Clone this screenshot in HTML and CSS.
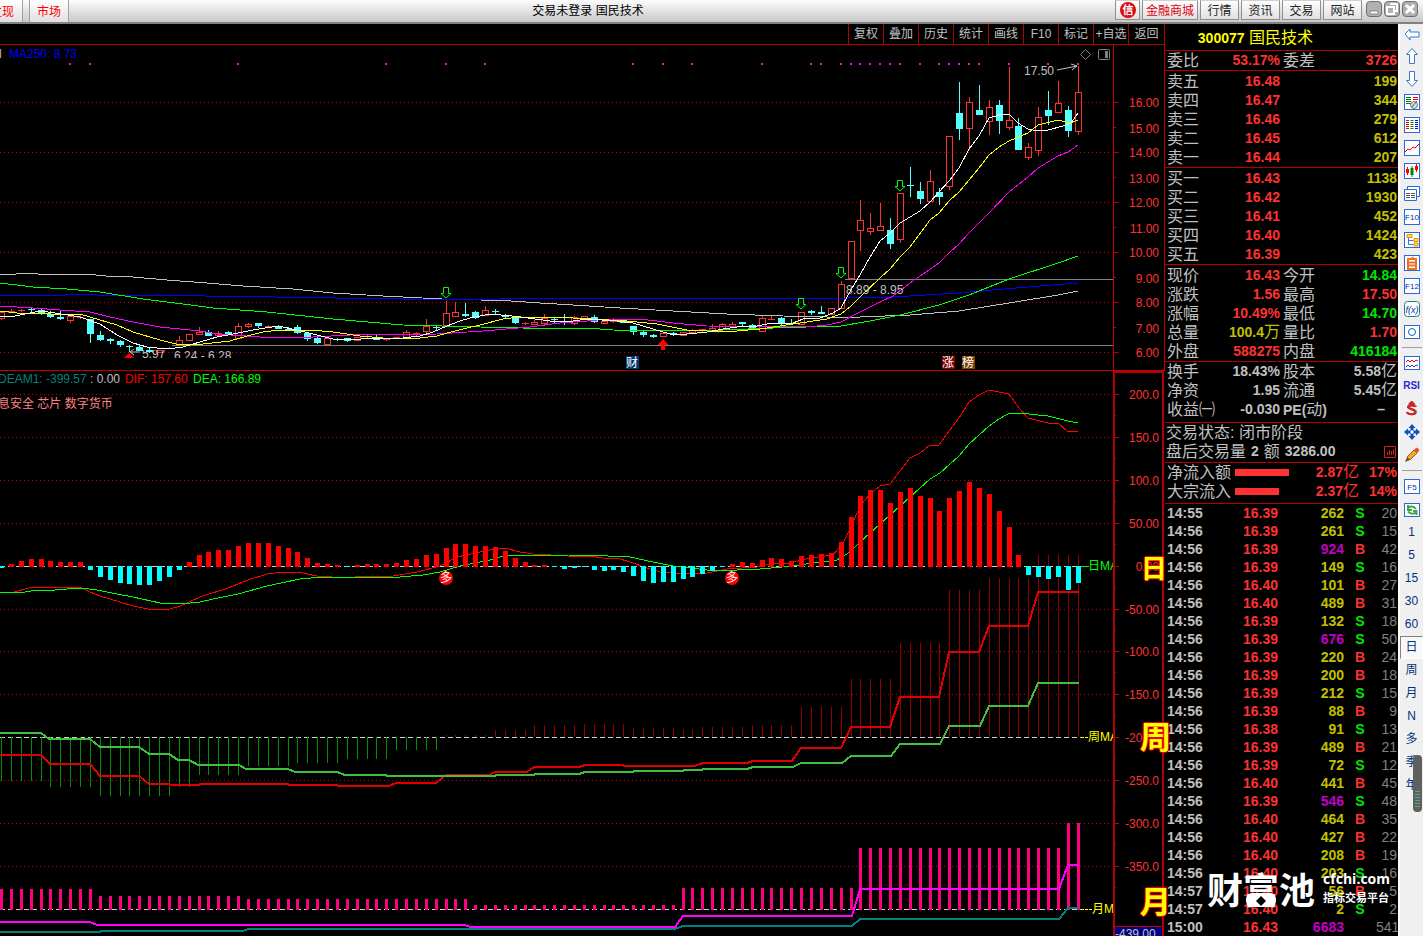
FILE: index.html
```html
<!DOCTYPE html>
<html lang="zh-CN">
<head>
<meta charset="utf-8">
<title>交易未登录 国民技术</title>
<link rel="stylesheet" href="styles.css">
</head>
<body>
<header class="topbar">
  <nav class="tabs">
    <button class="tab first">发现</button>
    <button class="tab">市场</button>
  </nav>
  <h1 class="title">交易未登录 国民技术</h1>
  <div class="links">
    <button class="link logo" aria-label="信"><svg width="18" height="18" viewBox="0 0 18 18"><circle cx="9" cy="9" r="8" fill="#d80c12"/><text x="9" y="13" text-anchor="middle" class="logo-text">信</text></svg></button>
    <button class="link mall">金融商城</button>
    <button class="link">行情</button>
    <button class="link">资讯</button>
    <button class="link">交易</button>
    <button class="link">网站</button>
  </div>
  <div class="winbtns">
    <button class="win" aria-label="最小化"><svg width="12" height="12" viewBox="0 0 12 12"><path d="M2 8h8v3H2z" fill="#fff" stroke="#888"/></svg></button>
    <button class="win" aria-label="还原"><svg width="12" height="12" viewBox="0 0 12 12"><path d="M4 1h7v7H9M1 4h7v7H1z" fill="none" stroke="#fff" stroke-width="2"/></svg></button>
    <button class="win" aria-label="关闭"><svg width="12" height="12" viewBox="0 0 12 12"><path d="M2 2l8 8M10 2l-8 8" stroke="#fff" stroke-width="3"/></svg></button>
  </div>
</header>

<main class="workspace">
  <section class="charts">
    <nav class="chart-tools">
      <button>复权</button><button>叠加</button><button>历史</button><button>统计</button><button>画线</button><button>F10</button><button>标记</button><button>+自选</button><button>返回</button>
    </nav>

    <svg class="pane price" viewBox="0 45 1165 326" preserveAspectRatio="xMaxYMin slice">
      <defs>
        <clipPath id="clip-low"><rect x="120" y="350" width="140" height="8"/></clipPath>
        <g id="down"><path d="M-2.5-5.5h5v6h2.500l-5 4.500-5-4.500h2.500z" fill="none" stroke="#00ff00"/></g>
      </defs>
      <g id="price-grid"></g>
      <g id="dots" fill="#ff00ff"></g>
      <g fill="none" class="crisp">
        <path d="M172 345.500H1113M845 279.500H1113" stroke="#808080"/>
        <g id="candles"></g>
        <polyline stroke="#c0c0c0" points="0,274 16,274 17,273 37,273 38,274 86,274 106,276 133,277 167,280 207,283 243,286 293,289 333,293 383,296 442,299 481,300 511,301 540,303 573,305 620,308 673,311 727,314 783,316 827,317 860,317 910,315 959,311 1009,303 1058,295 1078,291"/>
        <polyline stroke="#0000ff" points="0,295 65,295 67,294 95,294 97,295 203,295 205,296 273,296 275,297 333,297 335,298 401,298 403,299 499,299 501,298 846,298 893,297 959,293 1028,287 1078,283"/>
        <polyline stroke="#00ff00" points="0,283 33,287 67,289 100,292 143,299 183,304 213,308 267,312 333,319 403,325 480,327 523,328 587,328 613,330 670,331 723,330 773,328 841,326 870,321 900,315 939,305 969,295 1009,279 1058,263 1078,256"/>
        <polyline stroke="#ff00ff" points="0,306 33,308 60,310 90,312 110,317 133,322 160,327 200,331 217,334 260,337 313,337 350,335 437,334 483,331 530,327 560,323 587,321 607,319 640,319 673,323 707,326 807,327 827,325 841,322 860,312 880,302 893,296 910,283 939,263 949,253 959,244 969,233 989,213 1009,192 1028,177 1038,168 1058,156 1068,152 1078,145"/>
        <polyline stroke="#ffff00" points="0,311 17,313 50,314 80,314 90,317 117,325 133,332 160,340 180,345 203,344 230,341 247,336 263,332 280,330 310,330 333,332 360,336 383,338 420,338 437,336 447,333 467,328 480,325 503,319 520,317 573,318 627,321 657,324 687,330 707,331 737,331 760,329 793,324 827,319 841,314 851,306 860,297 880,278 890,269 900,257 910,247 930,220 939,213 949,201 959,192 969,180 979,168 989,155 999,147 1009,141 1028,133 1038,125 1058,120 1070,123 1078,120"/>
        <polyline stroke="#ffffff" points="0,316 15,316 20,315 30,313 40,311 55,313 80,317 100,324 117,335 133,343 147,347 167,349 183,347 200,342 217,337 233,334 253,330 278,326 297,330 313,334 333,339 353,340 370,338 403,338 420,336 433,332 447,326 460,321 470,318 490,314 512,316 528,318 550,321 573,321 587,319 617,321 633,323 653,329 670,334 687,334 707,332 723,329 737,327 757,326 767,324 793,323 803,319 820,318 833,313 841,308 848,295 860,275 870,257 880,241 890,233 900,223 920,211 930,202 939,192 949,181 959,168 969,149 979,136 989,118 999,115 1009,114 1018,123 1028,129 1038,131 1048,130 1063,126 1071,123 1078,113"/>
      </g>
      <use href="#down" x="446" y="293"/><use href="#down" x="801" y="304"/><use href="#down" x="841" y="273"/><use href="#down" x="900" y="186"/>
      <path d="M663 339l5.500 6h-3.500v5h-4v-5h-3.500zM124 358l5-5 5 5z" fill="#ff0000"/>
      <g class="t" fill="#c0c0c0">
        <text x="-1" y="58">l</text>
        <text x="1024" y="75">17.50</text>
        <text x="846" y="294">8.89 - 8.95</text>
        <g clip-path="url(#clip-low)"><text x="142" y="358">5.97</text><text x="174" y="360">6.24 - 6.28</text></g>
      </g>
      <text class="t" x="9" y="58" fill="#0000ff">MA250: 8.73</text>
      <path d="M1057 70l20-4M1071 64l6 2-5 4M131 352h9M134 349l-4 3 4 3" fill="none" stroke="#c0c0c0"/>
      <path d="M1085.500 49.500l5 5-5 5-5-5z" fill="none" stroke="#808080"/>
      <rect x="1098.500" y="49.500" width="11" height="10" rx="1" fill="none" stroke="#808080"/><rect x="1105" y="51" width="3" height="7" fill="#808080"/>
      <rect x="626" y="356" width="13" height="13" fill="#003870"/><rect x="942" y="356" width="13" height="13" fill="#800000"/><rect x="962" y="356" width="13" height="13" fill="#804000"/>
      <g class="t" fill="#fff" text-anchor="middle"><text x="632" y="367">财</text><text x="948" y="367">涨</text><text x="968" y="367">榜</text></g>
      <path class="crisp" d="M0 370.500H1165M1113.500 45V371M1164.500 45V371" stroke="#c00000"/>
      <g id="price-axis" class="t" fill="#ff3232" text-anchor="end"></g>
    </svg>

    <div class="lower">
    <svg class="pane" viewBox="0 371 1165 565" preserveAspectRatio="xMaxYMin slice">
      <defs><clipPath id="clip-right"><rect x="0" y="371" width="1113" height="565"/></clipPath></defs>
      <g id="ind-grid"></g>
      <g fill="none" class="crisp">
        <polyline stroke="#ff0000" points="0,593 14,592 29,588 35,587 60,588 80,587 90,592 100,596 120,602 133,606 148,609 170,609 180,606 200,597 228,588 248,580 267,574 283,572 298,572 317,576 347,578 363,576 393,576 417,572 440,566 457,557 480,552 495,549 505,548 520,552 533,554 568,556 590,556 603,558 617,558 630,562 647,568 660,572 673,573 707,573 727,569 757,567 770,564 790,563 810,558 833,555 843,543 851,527 860,506 870,494 880,486 890,484 910,458 920,453 930,445 939,445 949,431 959,418 969,402 979,395 989,390 999,392 1009,394 1019,408 1028,418 1048,423 1058,423 1068,432 1078,431"/>
        <polyline stroke="#00ff00" points="0,593 25,592 37,590 55,590 80,588 97,590 117,594 133,597 160,603 180,604 200,602 213,599 238,594 267,586 300,579 323,577 400,577 423,575 440,572 460,566 490,560 503,556 520,555 568,555 608,556 630,557 653,562 673,566 690,568 707,570 737,570 760,569 793,566 813,563 837,560 850,552 860,542 880,524 900,506 920,488 930,479 940,473 959,456 969,444 979,435 989,426 999,419 1008,414 1019,413 1048,416 1068,421 1078,423"/>
        <g id="bars"></g>
        <g stroke-width="2">
          <polyline stroke="#e00000" points="0,755 41,755 50,764 90,764 100,776 139,776 149,784 169,784 170,785 199,785 200,784 288,784 289,785 337,785 338,786 389,786 396,783 436,783 446,775 489,775 495,772 527,772 534,767 579,767 585,765 623,765 624,766 695,766 703,763 747,763 753,761 792,761 801,748 841,748 851,727 890,727 900,697 939,697 949,652 979,652 989,626 1028,626 1038,592 1079,592"/>
          <polyline stroke="#40c040" points="0,733 41,733 49,739 90,739 100,747 139,747 149,754 169,754 178,760 189,760 198,765 239,765 246,769 288,769 295,772 337,772 345,775 386,775 387,776 495,776 496,775 534,775 535,774 579,774 585,772 633,772 634,771 683,771 684,770 702,770 703,769 747,769 753,767 793,767 801,763 842,763 851,756 891,756 900,744 940,744 949,726 980,726 989,706 1028,706 1038,683 1079,683"/>
          <polyline stroke="#008080" points="0,932 100,932 101,931 243,931 248,929 675,929 683,926 852,926 860,919 1059,919 1068,908 1079,908"/>
          <polyline stroke="#ff00ff" points="0,922 90,922 97,925 465,925 470,927 675,927 683,916 852,916 860,889 1059,889 1068,865 1079,865"/>
        </g>
      </g>
      <g fill="#ff0000"><circle cx="446" cy="578" r="7"/><circle cx="732" cy="578" r="7"/></g>
      <g class="t" fill="#fff" text-anchor="middle"><text x="446" y="582">多</text><text x="732" y="582">多</text></g>
      <g clip-path="url(#clip-right)" class="t"><text x="1088" y="570" fill="#00ff00">日MA</text><text x="1088" y="741" fill="#ffff00">周MA</text><text x="1092" y="913" fill="#ffff00">月MA</text></g>
      <path class="crisp" d="M1081 566.500h8" stroke="#00ff00"/>
      <path class="crisp" d="M1081 737.500h8M1081 909.500h11" stroke="#ffff00" stroke-dasharray="3 1"/>
      <g class="t">
        <text x="-2" y="383" fill="#008080">DEAM1: -399.57</text>
        <text x="90" y="383" fill="#c0c0c0">: 0.00</text>
        <text x="125" y="383" fill="#ff0000">DIF: 157.60</text>
        <text x="193" y="383" fill="#00ff00">DEA: 166.89</text>
        <text x="-2" y="408" fill="#ff8080">息安全 芯片 数字货币</text>
      </g>
      <path class="crisp" d="M1114 371V936M1163 371V936M1113 372H1164" stroke="#b40000" stroke-width="2"/>
      <g id="ind-axis" class="t" fill="#ff3232" text-anchor="end"></g>
      <rect x="1115" y="927" width="47" height="9" fill="#000080"/>
      <path class="crisp" d="M1115 926.500H1162" stroke="#c00000"/>
      <text class="t" x="1115" y="938" fill="#c0c0c0">-439.00</text>
    </svg>
    <span class="big day">日</span><span class="big week">周</span><span class="big month">月</span>
    </div>
  </section>

  <aside class="quote">
    <h2 class="stock"><b>300077</b> 国民技术</h2>
    <table class="q ratio"><tr><th>委比</th><td class="r">53.17%</td><th>委差</th><td class="r">3726</td></tr></table>
    <table class="q book">
      <tr><th>卖五</th><td class="r">16.48</td><td class="y">199</td></tr>
      <tr><th>卖四</th><td class="r">16.47</td><td class="y">344</td></tr>
      <tr><th>卖三</th><td class="r">16.46</td><td class="y">279</td></tr>
      <tr><th>卖二</th><td class="r">16.45</td><td class="y">612</td></tr>
      <tr><th>卖一</th><td class="r">16.44</td><td class="y">207</td></tr>
    </table>
    <table class="q book">
      <tr><th>买一</th><td class="r">16.43</td><td class="y">1138</td></tr>
      <tr><th>买二</th><td class="r">16.42</td><td class="y">1930</td></tr>
      <tr><th>买三</th><td class="r">16.41</td><td class="y">452</td></tr>
      <tr><th>买四</th><td class="r">16.40</td><td class="y">1424</td></tr>
      <tr><th>买五</th><td class="r">16.39</td><td class="y">423</td></tr>
    </table>
    <table class="q">
      <tr><th>现价</th><td class="r">16.43</td><th>今开</th><td class="g">14.84</td></tr>
      <tr><th>涨跌</th><td class="r">1.56</td><th>最高</th><td class="r">17.50</td></tr>
      <tr><th>涨幅</th><td class="r">10.49%</td><th>最低</th><td class="g">14.70</td></tr>
      <tr><th>总量</th><td class="y">100.4<i>万</i></td><th>量比</th><td class="r">1.70</td></tr>
      <tr><th>外盘</th><td class="r">588275</td><th>内盘</th><td class="g">416184</td></tr>
    </table>
    <table class="q funds">
      <tr><th>换手</th><td>18.43%</td><th>股本</th><td>5.58<i>亿</i></td></tr>
      <tr><th>净资</th><td>1.95</td><th>流通</th><td>5.45<i>亿</i></td></tr>
      <tr><th>收益㈠</th><td>-0.030</td><th><b>PE(</b>动<b>)</b></th><td class="dash">–</td></tr>
    </table>
    <div class="status">
      <p>交易状态: 闭市阶段</p>
      <p>盘后交易量 <b>2</b> 额 <b>3286.00</b><svg class="mini" width="12" height="12" viewBox="0 0 12 12"><path d="M.5.5h11v11H.5zM3.500 9V6M5.500 9V4M7.500 9V5M9.500 9V3" fill="none" stroke="#d02020"/></svg></p>
    </div>
    <div class="flows">
      <div class="flow"><span class="name">净流入额</span><span class="track"><span class="bar" style="width:54px"></span></span><b>2.87<i>亿</i></b><b class="pct">17%</b></div>
      <div class="flow"><span class="name">大宗流入</span><span class="track"><span class="bar" style="width:44px"></span></span><b>2.37<i>亿</i></b><b class="pct">14%</b></div>
    </div>
    <table class="tape" id="tape">
      <tr><td>14:55</td><td>16.39</td><td>262</td><td class="g">S</td><td>20</td></tr>
      <tr><td>14:56</td><td>16.39</td><td>261</td><td class="g">S</td><td>15</td></tr>
      <tr><td>14:56</td><td>16.39</td><td class="m">924</td><td>B</td><td>42</td></tr>
      <tr><td>14:56</td><td>16.39</td><td>149</td><td class="g">S</td><td>16</td></tr>
      <tr><td>14:56</td><td>16.40</td><td>101</td><td>B</td><td>27</td></tr>
      <tr><td>14:56</td><td>16.40</td><td>489</td><td>B</td><td>31</td></tr>
      <tr><td>14:56</td><td>16.39</td><td>132</td><td class="g">S</td><td>18</td></tr>
      <tr><td>14:56</td><td>16.39</td><td class="m">676</td><td class="g">S</td><td>50</td></tr>
      <tr><td>14:56</td><td>16.39</td><td>220</td><td>B</td><td>24</td></tr>
      <tr><td>14:56</td><td>16.39</td><td>200</td><td>B</td><td>18</td></tr>
      <tr><td>14:56</td><td>16.39</td><td>212</td><td class="g">S</td><td>15</td></tr>
      <tr><td>14:56</td><td>16.39</td><td>88</td><td>B</td><td>9</td></tr>
      <tr><td>14:56</td><td>16.38</td><td>91</td><td class="g">S</td><td>13</td></tr>
      <tr><td>14:56</td><td>16.39</td><td>489</td><td>B</td><td>21</td></tr>
      <tr><td>14:56</td><td>16.39</td><td>72</td><td class="g">S</td><td>12</td></tr>
      <tr><td>14:56</td><td>16.40</td><td>441</td><td>B</td><td>45</td></tr>
      <tr><td>14:56</td><td>16.39</td><td class="m">546</td><td class="g">S</td><td>48</td></tr>
      <tr><td>14:56</td><td>16.40</td><td>464</td><td>B</td><td>35</td></tr>
      <tr><td>14:56</td><td>16.40</td><td>427</td><td>B</td><td>22</td></tr>
      <tr><td>14:56</td><td>16.40</td><td>208</td><td>B</td><td>19</td></tr>
      <tr><td>14:56</td><td>16.40</td><td>203</td><td class="g">S</td><td>16</td></tr>
      <tr><td>14:57</td><td>16.40</td><td>56</td><td>B</td><td>5</td></tr>
      <tr><td>14:57</td><td>16.40</td><td>2</td><td class="g">S</td><td>2</td></tr>
      <tr><td>15:00</td><td>16.43</td><td class="m">6683</td><td></td><td>541</td></tr>
    </table>
    <div class="mark">
      <span class="brand">财富池<svg class="pot" width="30" height="14" viewBox="0 0 30 14"><rect width="30" height="14" rx="6" fill="#fff"/><path d="M15 3l5 5-5 5-5-5z" fill="#000"/></svg></span>
      <span class="site"><b>cfchi.com</b><small>指标交易平台</small></span>
    </div>
  </aside>

  <nav class="side">
    <button aria-label="后退"><svg viewBox="0 0 16 16"><path d="M1 8l5-5v3h9v5H6v3z" fill="#fff" stroke="#3878d8"/></svg></button>
    <button aria-label="向上"><svg viewBox="0 0 16 16"><path d="M8 .5l5.500 6h-3v9h-5v-9h-3z" fill="#fff" stroke="#3878d8"/></svg></button>
    <button aria-label="向下"><svg viewBox="0 0 16 16"><path d="M8 15.500l5.500-6h-3v-9h-5v9h-3z" fill="#fff" stroke="#3878d8"/></svg></button>
    <button aria-label="自选报价"><svg viewBox="0 0 16 16"><rect class="f" x=".5" y=".5" width="15" height="15"/><path d="M2 3.500h5M2 5.500h5M2 7.500h5M2 9.500h5" stroke="#008000"/><path d="M9 3.500h5M9 5.500h5" stroke="#ff0000"/><circle cx="10" cy="11" r="3.500" fill="#ddd" stroke="#777"/><path d="M8 13l5-6" stroke="#555"/></svg></button>
    <button aria-label="行情列表"><svg viewBox="0 0 16 16"><rect class="f" x=".5" y=".5" width="15" height="15"/><g stroke-width="3" stroke-dasharray="1 1"><path d="M3.500 3v10" stroke="#ff0000"/><path d="M8 3v10" stroke="#008000"/><path d="M12.500 3v10" stroke="#0000e0"/></g></svg></button>
    <button aria-label="分时图"><svg viewBox="0 0 16 16"><rect class="f" x=".5" y=".5" width="15" height="15"/><path d="M1 12l3-3 2 1 3-3 2 1 4-4" fill="none" stroke="#ff0000"/></svg></button>
    <button aria-label="K线图"><svg viewBox="0 0 16 16"><rect class="f" x=".5" y=".5" width="15" height="15"/><path d="M3.500 4v8M12.500 1v8" stroke="#ff0000"/><path d="M2 6h3v4H2zM11 3h3v4h-3z" fill="#ff0000"/><path d="M8 3v11" stroke="#008000"/><path d="M6.500 5h3v7h-3z" fill="#008000"/></svg></button>
    <button aria-label="多股"><svg viewBox="0 0 16 16"><path class="f" d="M3.500.5h12v10h-12z"/><path class="f" d="M.5 3.500h12v11H.5z"/><path d="M2 7.500h4M7 7.500h4M2 9.500h4M7 9.500h4M2 11.500h4M7 11.500h4" stroke="#555"/></svg></button>
    <button aria-label="F10"><svg viewBox="0 0 16 16"><rect class="f" x=".5" y=".5" width="15" height="15"/><text x="8" y="11" class="ft" text-anchor="middle">F10</text></svg></button>
    <button aria-label="板块树"><svg viewBox="0 0 16 16"><rect class="f" x=".5" y=".5" width="15" height="15"/><path d="M4.500 5v7.500h5M4.500 8.500h5" fill="none" stroke="#3878d8"/><path d="M3 2.500h5v3H3zM10 6.500h4v3h-4zM10 11h4v3h-4z" fill="#ffe060" stroke="#e09000"/></svg></button>
    <button aria-label="自选股"><svg viewBox="0 0 16 16"><rect class="f" x=".5" y=".5" width="15" height="15"/><path d="M4 4h8v10H4zM8 4l1-2M4 7.500h8M4 10.500h8" fill="none" stroke="#f07020" stroke-width="2"/></svg></button>
    <button aria-label="F12"><svg viewBox="0 0 16 16"><rect class="f" x=".5" y=".5" width="15" height="15"/><text x="8" y="11" class="ft" text-anchor="middle">F12</text></svg></button>
    <button aria-label="公式"><svg viewBox="0 0 16 16"><rect x=".5" y=".5" width="15" height="15" rx="3" fill="#fff" stroke="#208080"/><text x="8" y="12" class="fx" text-anchor="middle">f(x)</text></svg></button>
    <button aria-label="圆圈工具"><svg viewBox="0 0 16 16"><rect class="f" x=".5" y="1.500" width="15" height="13"/><circle cx="8" cy="8" r="3.500" fill="none" stroke="#0068c8"/></svg></button>
    <hr>
    <button aria-label="指标"><svg viewBox="0 0 16 16"><rect class="f" x=".5" y="1.500" width="15" height="13"/><path d="M2 7l2-2 2 2 2-2 2 2 2-2 2 1" fill="none" stroke="#ff0000"/><path d="M2 12l2-2 2 2 2-2 2 2 2-2 2 1" fill="none" stroke="#3030d0"/></svg></button>
    <button class="rsi">RSI</button>
    <button aria-label="除权"><svg viewBox="0 0 16 16"><path d="M12 6c0-2-8-2-8 0s8 2 8 5-8 3-9 0M8 1v3M5 4l3-3 3 3" fill="none" stroke="#777" stroke-width="2"/><path d="M11 6c0-2-7-2-7 0s7 2 7 5-7 3-8 0M7.500 1v3M5 3.500L7.500 1 10 3.500" fill="none" stroke="#d82020" stroke-width="2"/></svg></button>
    <button aria-label="移动"><svg viewBox="0 0 16 16"><path d="M8 0l3.500 4h-2v2.500H12v-2L16 8l-4 3.500v-2H9.500V12h2L8 16l-3.500-4h2V9.500H4v2L0 8l4-3.500v2h2.500V4h-2z" fill="#0a50c8"/><path d="M6.500 6.500h3v3h-3z" fill="#fff"/></svg></button>
    <button aria-label="画笔"><svg viewBox="0 0 16 16"><path d="M1 15l2-5 3 3z" fill="#705030"/><path d="M3 10l7-7 3 3-7 7z" fill="#f0a830" stroke="#a06010"/><path d="M10 3l2-2c1-1 4 2 3 3l-2 2z" fill="#e05040"/></svg></button>
    <hr class="last">
    <button aria-label="F5"><svg viewBox="0 0 16 16"><rect class="f" x=".5" y=".5" width="15" height="14"/><text x="8" y="11" class="ft" text-anchor="middle">F5</text></svg></button>
    <button aria-label="刷新"><svg viewBox="0 0 16 16"><rect class="f" x=".5" y="1.500" width="15" height="13"/><path d="M4 8c0-4 5-5 8-1M12 8.500c0 4-5 4-8 1M4 3v5h4M12.500 13V9H9" fill="none" stroke="#40a840" stroke-width="2"/></svg></button>
    <button>1</button><button>5</button><button>15</button><button>30</button><button>60</button>
    <button class="on">日</button><button>周</button><button>月</button><button>N</button><button>多</button><button>季</button><button>年</button>
    <div class="gauge"></div>
  </nav>
</main>
<script src="charts.js"></script>
</body>
</html>
```
FILE: styles.css
```css
* { box-sizing: border-box; }
body {
  margin: 0; height: 100vh; display: flex; flex-direction: column; overflow: hidden;
  background: #000; color: #c0c0c0;
  font: 12px/18px "Liberation Sans", "Noto Sans CJK SC", sans-serif;
}
button { font: inherit; color: inherit; background: none; border: 0; padding: 0; margin: 0; white-space: nowrap; }
i { font-style: normal; }

/* top bar */
.topbar {
  flex: none; display: flex; height: 24px; padding-right: 5px; color: #000;
  background: linear-gradient(#fcfcfc, #c8c8c8); border-bottom: 2px solid #808080;
}
.tabs { display: flex; gap: 6px; }
.tab {
  width: 40px; color: #f00; background: linear-gradient(#fff, #e0e0e0);
  border: solid #a0a0a0; border-width: 0 1px; padding-top: 1px;
}
.tab.first { width: 23px; direction: rtl; overflow: hidden; padding-right: 8px; border-left: 0; }
.title { flex: 1; margin: 0; padding-right: 8px; font-size: 12px; font-weight: 400; line-height: 22px; text-align: center; }
.links { display: flex; gap: 2px; }
.link {
  width: 39px; height: 20px; line-height: 18px; padding-top: 1px; color: #222;
  background: linear-gradient(#fff, #e0e0e0); border: 1px solid #909090; border-top-color: #d0d0d0;
}
.link.mall { width: 56px; color: #e00010; }
.link.logo { width: 25px; display: flex; align-items: center; justify-content: center; padding: 0; }
.logo-text { font: bold 11px "Noto Sans CJK SC", sans-serif; fill: #fff; }
.winbtns { display: flex; gap: 2px; margin-left: 4px; }
.win {
  width: 16px; height: 16px; margin-top: 1px; display: flex; align-items: center; justify-content: center;
  border: 1px solid #707070; border-radius: 4px; background: #b0b0b0;
}

/* layout */
.workspace { flex: 1; min-height: 0; display: flex; }
.charts { flex: 1; min-width: 0; display: flex; flex-direction: column; }
.chart-tools { flex: none; height: 21px; display: flex; justify-content: flex-end; border-bottom: 1px solid #b00000; border-right: 1px solid #b00000; }
.chart-tools button { width: 35px; border-left: 1px solid #b00000; }
.chart-tools button:last-child { width: 36px; }
.pane { display: block; width: 100%; height: 100%; }
.pane.price { flex: 326; min-height: 0; }
.lower { flex: 565; min-height: 0; position: relative; z-index: 1; }
.crisp { shape-rendering: crispEdges; }
.t { font: 12px "Liberation Sans", "Noto Sans CJK SC", sans-serif; }
.big {
  position: absolute; right: -2px; font: bold 26px/32px "Noto Sans CJK SC", sans-serif; color: #ff0;
  text-shadow: 1px 0 1px #f00, -1px 0 1px #f00, 0 1px 1px #f00, 0 -1px 1px #f00;
}
.day { top: 180px; }
.week { top: 348px; right: -6px; font-size: 31px; }
.month { top: 513px; right: -6px; font-size: 31px; }

/* quote panel */
.quote { flex: none; width: 233px; position: relative; font-size: 16px; }
.quote b, .quote td { font-size: 14px; font-weight: 700; }
.quote i { font-size: 16px; font-weight: 400; line-height: 14px; }
.stock { margin: 0; height: 27px; border-bottom: 1px solid #b00000; color: #ff0; font-size: 16px; font-weight: 400; line-height: 28px; text-align: right; padding-right: 85px; white-space: nowrap; }
.q {
  width: 100%; table-layout: fixed; border-collapse: separate; border-spacing: 0;
  padding: 1px 1px 0 2px; border-bottom: 1px solid #b00000; line-height: 19px; white-space: nowrap;
}
.q th { width: 35px; padding: 0 0 0 3px; height: 19px; font-weight: 400; text-align: left; }
.q th:first-child { width: 50px; padding: 0; }
.q th b { line-height: 14px; }
.q td { width: 63px; padding: 0; height: 19px; text-align: right; }
.q td:last-child { width: auto; }
.q.ratio { padding-top: 0; }
.q.funds { padding-top: 0; padding-bottom: 3px; }
.q .dash { padding-right: 12px; }
.r { color: #ff3232; }
.g { color: #00e600; }
.y { color: #c0c000; }
.m { color: #c000c0; }
.status { padding-bottom: 1px; border-bottom: 1px solid #b00000; line-height: 19px; white-space: nowrap; }
.status p { margin: 0; height: 19px; display: flex; align-items: center; gap: 5px; padding: 0 2px 0 1px; }
.mini { margin-left: auto; }
.flows { padding: 0 0 2px 2px; border-bottom: 1px solid #b00000; color: #ff3232; line-height: 19px; }
.flow { display: flex; align-items: center; height: 19px; white-space: nowrap; }
.name { width: 68px; color: #c0c0c0; }
.track { flex: 1; }
.bar { display: block; height: 7px; background: #ff3232; }
.pct { width: 39px; text-align: right; padding-right: 1px; }
.tape { width: 100%; table-layout: fixed; border-spacing: 0; padding: 0 1px 0 2px; line-height: 18px; }
.tape td { padding: 0; height: 18px; text-align: right; color: #c0c000; }
.tape td:nth-child(1) { width: 40px; text-align: left; color: #c0c0c0; }
.tape td:nth-child(2) { width: 71px; color: #ff3232; }
.tape td:nth-child(3) { width: 66px; }
.tape td:nth-child(4) { width: 32px; text-align: center; color: #ff3232; }
.tape td:nth-child(5) { font-weight: 400; color: #808080; }
.tape td.m { color: #c000c0; }
.tape td.g { color: #00e600; }
.mark { position: absolute; right: 8px; bottom: 26px; display: flex; align-items: center; gap: 8px; color: #fff; }
.brand { position: relative; font: bold 36px/44px "Noto Sans CJK SC", sans-serif; }
.pot { position: absolute; left: 39px; bottom: 3px; }
.site { display: flex; flex-direction: column; line-height: 18px; }
.quote .site b { font: bold 14px/18px "Open Sans", "Noto Sans", sans-serif; }
.site small { font: bold 11px/18px "Noto Sans CJK SC", sans-serif; }

/* side tool strip */
.side { flex: none; width: 25px; position: relative; background: #f0f0f0; border-left: 2px solid #fff; color: #003080; display: flex; flex-direction: column; }
.side button { flex: none; height: 23px; line-height: 23px; display: flex; align-items: center; justify-content: center; }
.side button:first-child { height: 20px; }
.side svg { width: 16px; height: 16px; }
.side hr { flex: none; width: 20px; height: 1px; margin: 4px auto 3px; border: 0; background: #a0a0a0; }
.side hr.last { margin: 4px auto; }
.side .rsi { font-size: 10px; font-weight: 700; color: #2828d0; }
.side .on { border: 1px solid #808080; border-right-color: #fff; border-bottom-color: #fff; background: #f8f8f8; }
.f { fill: #fff; stroke: #2868e0; }
.ft { font: 8px "Liberation Sans", sans-serif; fill: #0030b0; }
.fx { font: italic 9px "Liberation Sans", sans-serif; fill: #0030b0; }
.gauge {
  position: absolute; right: 1px; top: 731px; width: 9px; height: 57px; border-radius: 4px;
  background: repeating-linear-gradient(#50b070 0 1px, #606060 1px 3px) 50% 36px / 5px 18px no-repeat #606060;
}
```
FILE: charts.js
```js
const byId = id => document.getElementById(id);
const barX = i => 1 + 10 * i - Math.floor((i + 3.6) / 8.16);
const path = (d, attrs) => `<path class="crisp" d="${d}" fill="none" ${attrs}/>`;

// type, body top, body bottom, high, low
const candles = `r312,319,312,320 r311,313,309,313 r310,311,309,312 c309,310,307,312 c310,313,309,315 c314,317,311,318 c317,319,311,320 r316,321,315,323 r317,318,315,319 c319,334,319,343
c335,340,331,341 c339,341,338,344 c341,345,340,347 c346,347,345,352 c347,351,344,351 c350,352,347,353 r350,353,350,353 r348,349,347,349 r340,345,336,345 r334,341,334,341
r332,335,327,335 c332,336,330,336 r333,336,331,337 c332,335,331,335 r326,339,323,339 r324,327,323,328 c323,326,323,328 r326,328,325,328 c326,329,325,329 c329,331,327,331
c327,333,325,334 c333,339,332,341 c338,343,337,344 r338,345,338,345 c339,340,338,341 c338,341,338,342 r337,341,337,341 r336,337,335,338 c337,340,335,340 r339,340,338,341
r337,339,337,339 r332,338,330,338 r333,335,332,336 r326,332,319,333 c327,328,325,330 r313,326,301,326 r312,317,302,317 c314,316,303,317 c312,318,311,319 r310,316,306,316
c311,312,309,314 c315,317,314,318 c317,323,316,324 r323,324,322,325 r322,325,320,325 r318,324,314,325 c319,320,318,323 c321,323,314,325 r317,324,316,325 r316,320,316,320
c317,322,315,323 r321,324,321,324 r320,322,318,323 c321,323,320,323 c326,332,326,335 c332,335,331,337 c335,337,334,338 r333,337,333,337 c333,334,332,336 r332,336,332,336
r330,333,329,333 r329,330,329,333 r328,331,324,331 r324,330,323,331 r324,327,322,327 c322,324,322,326 c325,328,324,328 r318,332,316,332 r319,320,316,320 c318,324,317,325
c323,324,319,324 r312,325,312,325 c311,313,310,315 c312,314,306,314 r308,315,308,315 r284,309,281,309 r241,279,241,279 r220,231,200,251 r228,232,213,235 r226,231,203,231
c230,244,218,249 r193,240,193,243 c185,186,167,197 c191,199,182,204 r181,202,170,202 c192,197,188,205 r136,187,136,190 c113,129,82,140 r102,129,97,150 c110,115,85,115
r107,122,100,135 c105,121,100,134 r120,128,67,130 c126,150,118,150 r147,158,143,160 r117,151,107,156 c110,116,91,125 r103,113,81,113 c110,131,106,137 r92,132,66,135`.split(/\s+/);

let hollow = '', solid = '';
candles.forEach((c, i) => {
  const [top, bottom, high, low] = c.slice(1).split(',').map(Number);
  const x = barX(i);
  if (c[0] === 'r') {
    const h = bottom - top - 1;
    hollow += `M${x + 0.5} ${high}V${top}M${x + 0.5} ${bottom}V${low}`;
    hollow += h > 0 ? `M${x - 2.5} ${top + 0.5}h6v${h}h-6z` : `M${x - 3} ${top + 0.5}h7`;
  } else {
    solid += `M${x} ${high}h1V${low}h-1zM${x - 3} ${top}h7V${bottom}h-7z`;
  }
});
byId('candles').innerHTML = path(hollow, 'stroke="#ff3232"') + `<path d="${solid}" fill="#54ffff"/>`;

byId('dots').innerHTML = [70, 90, 238, 386, 446, 485, 633, 663, 692, 762, 811, 821, 841, 851, 860, 870, 880, 890, 900, 920, 939, 949, 959, 969, 979, 1009, 1048, 1078]
  .map(x => `<rect x="${x - 1}" y="63" width="2" height="2"/>`).join('');

// level of each daily bar; the zero line is at 566
const daily = [568,564,561,559,559,561,562,562,562,570,577,580,583,584,585,585,581,577,570,562,555,552,550,550,546,543,543,543,546,548,552,558,563,564,565,567,565,564,564,564,563,560,559,555,554,548,544,544,546,546,547,551,558,562,565,565,567,569,568,567,570,571,570,572,576,581,583,582,582,579,577,574,571,567,564,562,563,560,558,559,561,556,555,554,553,542,517,496,490,490,503,492,488,496,498,511,498,491,482,488,494,511,527,555,575,577,579,577,590,583];
// [last index, level] runs
const weekly = [[4,781],[9,787],[17,796],[19,787],[24,775],[29,766],[34,763],[39,759],[44,750],[49,735],[53,730],[58,725],[63,724],[68,728],[70,729],[75,727],[80,725],[85,707],[90,679],[95,643],[99,590],[104,578],[109,555]];
const monthly = [[9,889],[24,896],[47,899],[68,905],[86,888],[107,848],[109,823]];

const expand = runs => {
  const out = [];
  runs.forEach(([last, level]) => { while (out.length <= last) out.push(level); });
  return out;
};
let up = '', down = '', wUp = '', wDown = '', month = '';
expand(weekly).forEach((y, i) => {
  const seg = `M${barX(i) + 0.5} 737V${y}`;
  if (y < 737) wUp += seg; else wDown += seg;
});
daily.forEach((y, i) => {
  const x = barX(i) + 0.5;
  if (y < 566) up += `M${x} 567V${y}`; else down += `M${x} 566V${y}`;
});
expand(monthly).forEach((y, i) => { month += `M${barX(i) + 0.5} 910V${y}`; });
byId('bars').innerHTML =
  path(wDown, 'stroke="#009000"') + path(wUp, 'stroke="#900000"') +
  path(up, 'stroke="#ff0000" stroke-width="5"') + path(down, 'stroke="#00ffff" stroke-width="5"') +
  path(month, 'stroke="#ff0080" stroke-width="3"');

// grids, ticks and axis labels
const dotted = y => path(`M0 ${y + 0.5}H1112`, 'stroke="#c00000" stroke-dasharray="1 3"');
const dashed = y => path(`M0 ${y + 0.5}H1081`, 'stroke="#d0d0d0" stroke-dasharray="5 3"');
byId('price-grid').innerHTML = [102, 152, 202, 252, 302, 352].map(dotted).join('');
byId('ind-grid').innerHTML = [394, 437, 480, 523, 609, 651, 694, 780, 823, 866].map(dotted).join('') + [566, 737, 909].map(dashed).join('');

let axis = '';
for (let v = 16, k = 0; v >= 6; v--, k++) {
  const y = 102 + 25 * k;
  axis += path(`M1114 ${y + 0.5}h${k % 2 ? 2 : 5}`, 'stroke="#c00000"');
  axis += `<text x="1159" y="${y + (k % 2 ? 6 : 5)}">${v.toFixed(2)}</text>`;
}
byId('price-axis').innerHTML = axis;

const labels = ['200.0', '150.0', '100.0', '50.00', '0.00', '-50.00', '-100.0', '-150.0', '-200.0', '-250.0', '-300.0', '-350.0'];
byId('ind-axis').innerHTML = labels.map((label, k) => {
  const y = Math.round(394 + 42.9 * k);
  return path(`M1115 ${y + 0.5}h4M1115 ${y + 21.5}h1`, 'stroke="#c00000"') + `<text x="1159" y="${y + 5}">${label}</text>`;
}).join('');
```
